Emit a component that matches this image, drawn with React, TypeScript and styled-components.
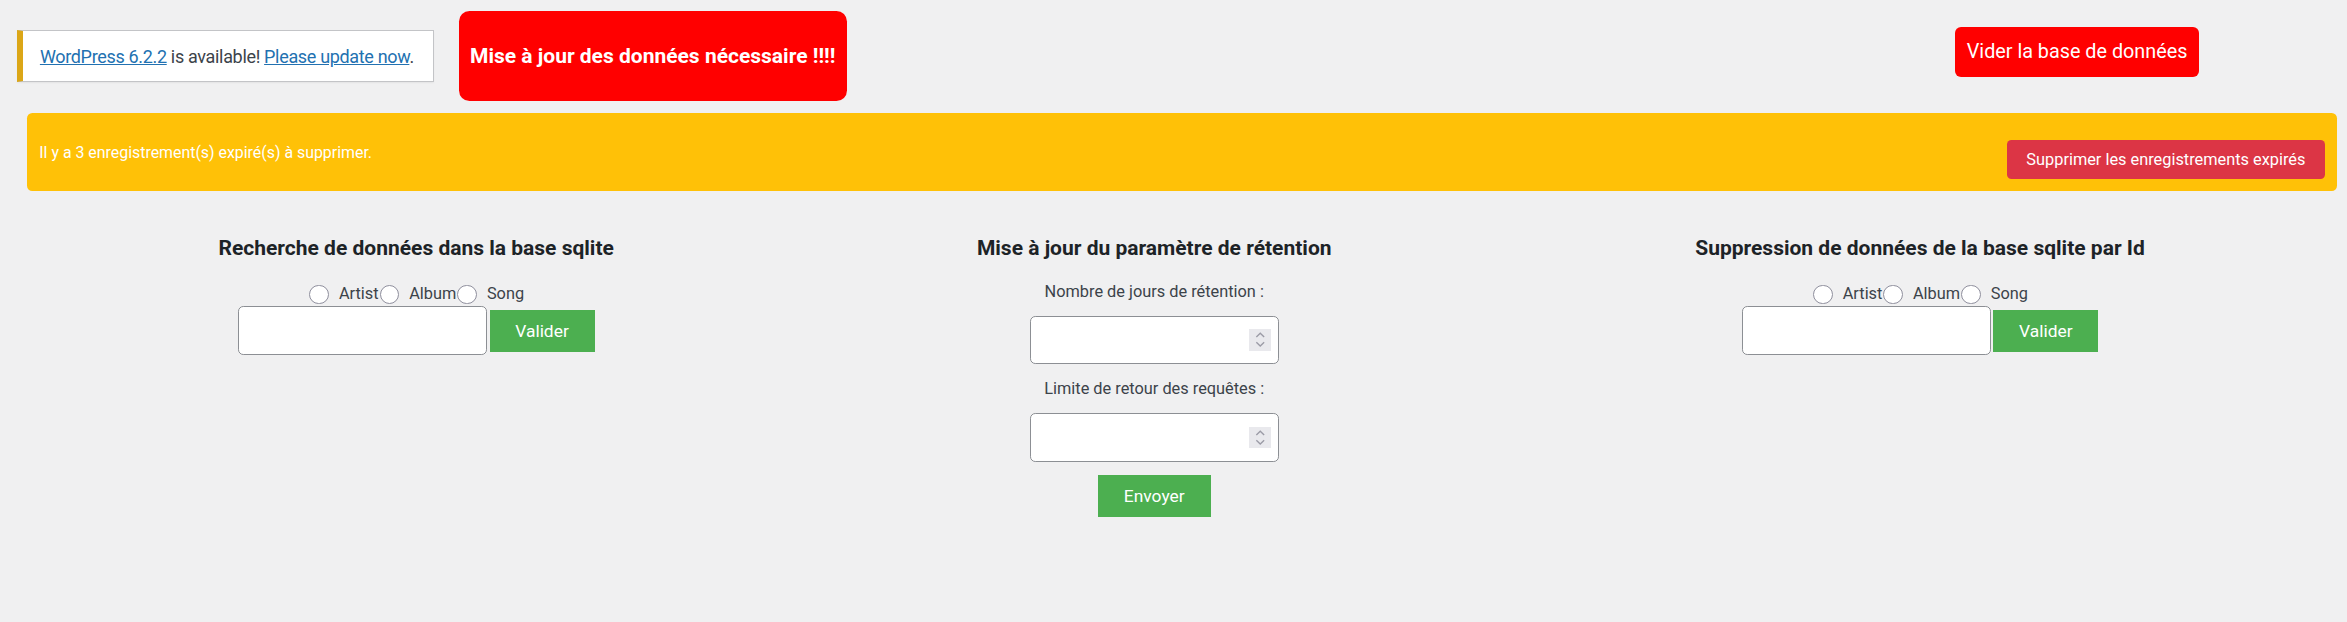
import React from "react";
import styled, { createGlobalStyle } from "styled-components";

const GlobalStyle = createGlobalStyle`
  html, body {
    margin: 0;
    padding: 0;
    background: #f0f0f1;
  }
  body {
    font-family: Roboto, "Liberation Sans", Arial, sans-serif;
    color: #3c434a;
  }
  * { box-sizing: border-box; }
`;

const Page = styled.div`
  zoom: 1.5;
  font-size: 13px;
`;

const TopBar = styled.div`
  display: flex;
  align-items: flex-start;
  padding: 7.3px 0 0 11px;
`;

const UpdateNag = styled.div`
  margin-top: 12.7px;
  background: #fff;
  border: 1px solid #c3c4c7;
  border-left: 4px solid #dba617;
  box-shadow: 0 1px 1px rgba(0, 0, 0, 0.04);
  padding: 9px 12.6px 7px 11.6px;
  font-size: 12px;
  letter-spacing: -0.22px;
  line-height: 17.5px;
  white-space: nowrap;
`;

const NagLink = styled.a`
  color: #2271b1;
  text-decoration: underline;
`;

const RedButton = styled.button<{ $w: number; $h: number; $bold?: boolean; $radius: number }>`
  width: ${(p) => p.$w}px;
  height: ${(p) => p.$h}px;
  padding: 0;
  border: none;
  border-radius: ${(p) => p.$radius}px;
  background: #ff0000;
  color: #fff;
  font-family: Roboto, "Liberation Sans", Arial, sans-serif;
  font-size: ${(p) => (p.$bold ? 14 : 13.2)}px;
  font-weight: ${(p) => (p.$bold ? 700 : 400)};
  white-space: nowrap;
  cursor: pointer;
`;

const UpdateDataButton = styled(RedButton)`
  margin-left: 16.8px;
`;

const EmptyDbButton = styled(RedButton)`
  margin-left: 739.1px;
  margin-top: 10.9px;
`;

const ExpiredAlert = styled.div`
  margin: 8.3px 6.9px 0 18.2px;
  height: 52px;
  padding: 8px;
  display: flex;
  justify-content: space-between;
  align-items: center;
  background: #ffc107;
  border-radius: 3.5px;
  color: #fff;
  font-size: 10.6px;
`;

const PurgeButton = styled.button`
  align-self: flex-end;
  width: 211.7px;
  height: 26.2px;
  padding: 0;
  border: none;
  border-radius: 3px;
  background: #dc3545;
  color: #fff;
  font-family: Roboto, "Liberation Sans", Arial, sans-serif;
  font-size: 10.9px;
  white-space: nowrap;
  cursor: pointer;
`;

const Columns = styled.div`
  margin: 28.1px 6.9px 0 18.2px;
  padding: 0 8px;
  display: flex;
  justify-content: space-around;
  align-items: flex-start;
`;

const Column = styled.form<{ $w: number }>`
  width: ${(p) => p.$w}px;
  display: flex;
  flex-direction: column;
  align-items: center;
  margin: 0;
`;

const Heading = styled.h3`
  margin: 0 0 11px;
  font-size: 14px;
  line-height: 20px;
  font-weight: 700;
  color: #1d2327;
  white-space: nowrap;
`;

const RadioRow = styled.div`
  margin-top: 1.7px;
  height: 16px;
  display: flex;
  align-items: center;
  font-size: 10.9px;
  line-height: 16px;
  white-space: nowrap;
`;

const Radio = styled.input`
  appearance: none;
  -webkit-appearance: none;
  width: 13px;
  height: 13px;
  margin: 0 6.7px 0 0.7px;
  border: 1px solid #8f8f9d;
  border-radius: 50%;
  background: #fff;
`;

const InputRow = styled.div`
  display: flex;
  align-items: center;
  gap: 1.8px;
`;

const TextInput = styled.input`
  width: 166px;
  height: 32.6px;
  padding: 0 8px;
  border: 1px solid #8c8f94;
  border-radius: 3.5px;
  background: #fff;
  font-size: 13px;
  outline: none;
`;

const GreenButton = styled.button<{ $w: number }>`
  width: ${(p) => p.$w}px;
  height: 27.8px;
  padding: 0;
  border: none;
  border-radius: 0;
  background: #4caf50;
  color: #fff;
  font-family: Roboto, "Liberation Sans", Arial, sans-serif;
  font-size: 11.6px;
  cursor: pointer;
`;

const FieldLabel = styled.label`
  font-size: 10.9px;
  line-height: 16px;
  margin-bottom: 7.9px;
  white-space: nowrap;
`;

const NumberField = styled.div`
  width: 166.2px;
  height: 32.5px;
  margin-bottom: 8.7px;
  display: flex;
  align-items: center;
  padding: 0 4.4px 0 8px;
  border: 1px solid #8c8f94;
  border-radius: 3.5px;
  background: #fff;
`;

const NumberInput = styled.input`
  flex: 1;
  min-width: 0;
  height: 100%;
  border: none;
  background: transparent;
  outline: none;
  font-size: 13px;
  padding: 0;
`;

const Spinner = styled.span`
  width: 15px;
  height: 14.5px;
  background: #e9e9ed;
  display: flex;
`;

const SpinnerIcon = () => (
  <svg width="15" height="14.5" viewBox="0 0 15 14.5" fill="none">
    <polyline points="4.9,5.3 7.5,2.8 10.1,5.3" stroke="#9b9ba6" strokeWidth="0.9" />
    <polyline points="4.9,8.9 7.5,11.4 10.1,8.9" stroke="#9b9ba6" strokeWidth="0.9" />
  </svg>
);

const RadioChoices = ({ name }: { name: string }) => (
  <RadioRow>
    <Radio type="radio" name={name} value="artist" />
    <span>Artist</span>
    <Radio type="radio" name={name} value="album" />
    <span>Album</span>
    <Radio type="radio" name={name} value="song" />
    <span>Song</span>
  </RadioRow>
);

export default function App() {
  return (
    <>
      <GlobalStyle />
      <Page>
        <TopBar>
          <UpdateNag>
            <NagLink href="#">WordPress 6.2.2</NagLink> is available!{" "}
            <NagLink href="#">Please update now</NagLink>.
          </UpdateNag>
          <UpdateDataButton $w={258.5} $h={59.8} $radius={7} $bold>
            Mise à jour des données nécessaire !!!!
          </UpdateDataButton>
          <EmptyDbButton $w={162.4} $h={32.9} $radius={4}>
            Vider la base de données
          </EmptyDbButton>
        </TopBar>

        <ExpiredAlert>
          <span>Il y a 3 enregistrement(s) expiré(s) à supprimer.</span>
          <PurgeButton>Supprimer les enregistrements expirés</PurgeButton>
        </ExpiredAlert>

        <Columns>
          <Column $w={263} onSubmit={(e) => e.preventDefault()}>
            <Heading>Recherche de données dans la base sqlite</Heading>
            <RadioChoices name="search-type" />
            <InputRow>
              <TextInput type="text" />
              <GreenButton $w={70} type="submit">Valider</GreenButton>
            </InputRow>
          </Column>

          <Column $w={242} onSubmit={(e) => e.preventDefault()}>
            <Heading>Mise à jour du paramètre de rétention</Heading>
            <FieldLabel>Nombre de jours de rétention :</FieldLabel>
            <NumberField>
              <NumberInput type="text" inputMode="numeric" />
              <Spinner><SpinnerIcon /></Spinner>
            </NumberField>
            <FieldLabel>Limite de retour des requêtes :</FieldLabel>
            <NumberField>
              <NumberInput type="text" inputMode="numeric" />
              <Spinner><SpinnerIcon /></Spinner>
            </NumberField>
            <GreenButton $w={75.4} type="submit">Envoyer</GreenButton>
          </Column>

          <Column $w={300} onSubmit={(e) => e.preventDefault()}>
            <Heading>Suppression de données de la base sqlite par Id</Heading>
            <RadioChoices name="delete-type" />
            <InputRow>
              <TextInput type="text" />
              <GreenButton $w={70} type="submit">Valider</GreenButton>
            </InputRow>
          </Column>
        </Columns>
      </Page>
    </>
  );
}
